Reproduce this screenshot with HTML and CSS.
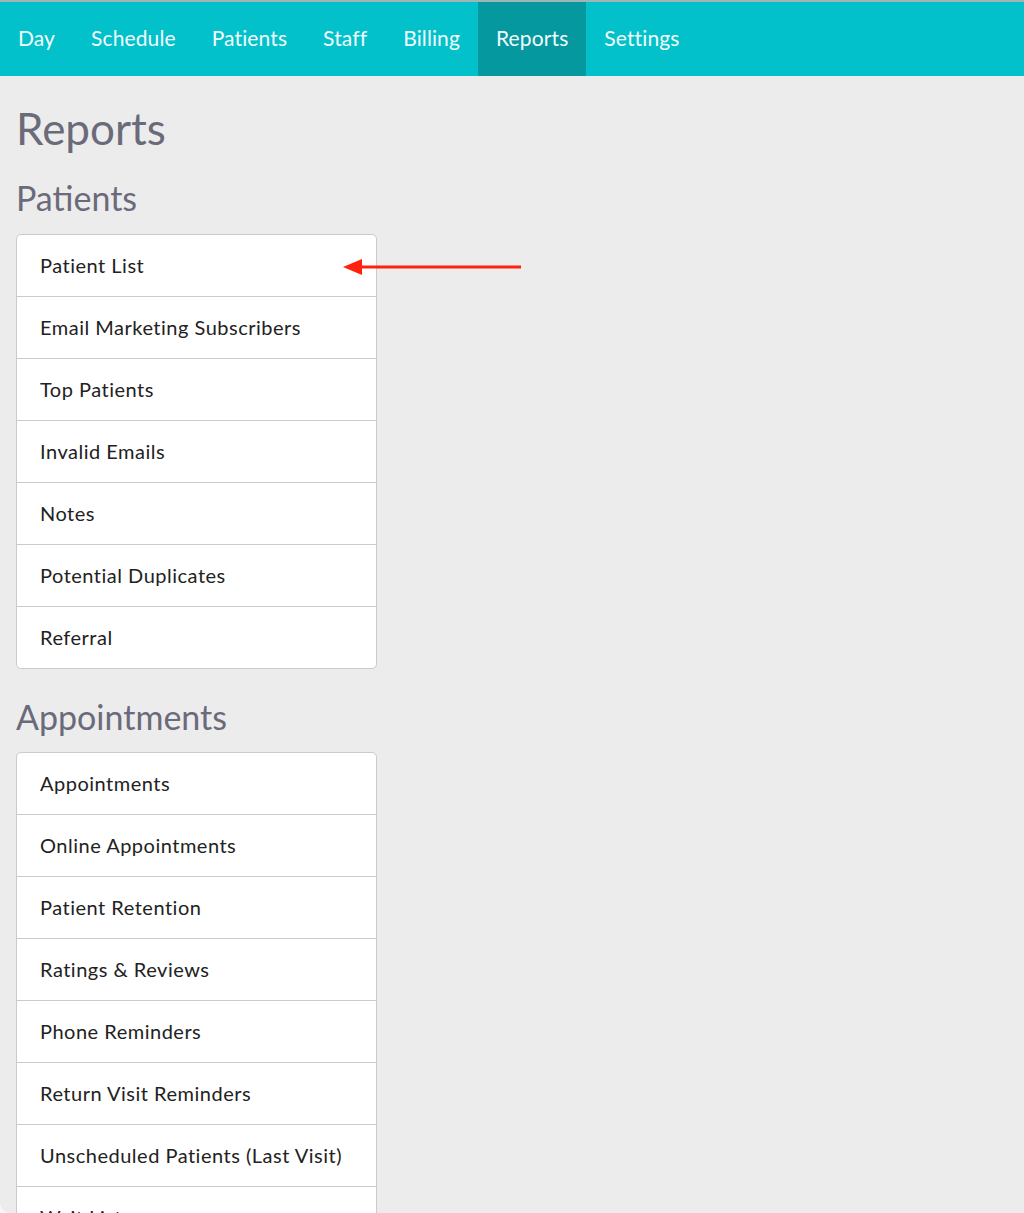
FILE: index.html
```html
<!DOCTYPE html>
<html>
<head>
<meta charset="utf-8">
<link rel="stylesheet" href="styles.css">
</head>
<body>
<nav class="topnav">
  <a class="nav-item">Day</a>
  <a class="nav-item">Schedule</a>
  <a class="nav-item">Patients</a>
  <a class="nav-item">Staff</a>
  <a class="nav-item">Billing</a>
  <a class="nav-item active">Reports</a>
  <a class="nav-item">Settings</a>
</nav>
<main class="content">
  <h1 class="page-title">Reports</h1>

  <h2 class="section-title">Patients</h2>
  <div class="report-list-wrap">
    <ul class="report-list">
      <li>Patient List</li>
      <li>Email Marketing Subscribers</li>
      <li>Top Patients</li>
      <li>Invalid Emails</li>
      <li>Notes</li>
      <li>Potential Duplicates</li>
      <li>Referral</li>
    </ul>
    <svg class="annot-arrow" width="200" height="24" viewBox="0 0 200 24">
      <line x1="14" y1="12" x2="178" y2="12" stroke="#ff2210" stroke-width="3"/>
      <polygon points="0,12 19,4 19,20" fill="#ff2210"/>
    </svg>
  </div>

  <h2 class="section-title section-title--tight">Appointments</h2>
  <ul class="report-list">
    <li>Appointments</li>
    <li>Online Appointments</li>
    <li>Patient Retention</li>
    <li>Ratings &amp; Reviews</li>
    <li>Phone Reminders</li>
    <li>Return Visit Reminders</li>
    <li>Unscheduled Patients (Last Visit)</li>
    <li>Wait List</li>
    <li>Cancellations</li>
  </ul>
</main>
<div class="window-corner"></div>
</body>
</html>
```

FILE: styles.css
```css
html, body {
  margin: 0;
  padding: 0;
}
body {
  background: #ececec;
  font-family: Lato, "Open Sans", sans-serif;
  overflow: hidden;
  height: 1213px;
}
.topnav {
  display: flex;
  background: #02c1cb;
  border-top: 2px solid #9fb5b7;
  height: 74px;
  align-items: stretch;
}
.nav-item {
  display: flex;
  align-items: center;
  padding: 0 18px 3px;
  color: #f2fbfb;
  font-size: 21px;
  letter-spacing: 0.12px;
}
.nav-item.active {
  background: #05989e;
}
.content {
  padding: 0 16px;
}
.page-title {
  margin: 0;
  padding-top: 25px;
  font-size: 44px;
  line-height: 54px;
  font-weight: 400;
  color: #6b6a7a;
}
.section-title {
  margin: 22px 0 15px;
  font-size: 34px;
  line-height: 42px;
  font-weight: 400;
  color: #6b6a7a;
}
.section-title--tight {
  margin-bottom: 14px;
}
.report-list-wrap {
  position: relative;
}
.report-list {
  list-style: none;
  margin: 0 0 27px;
  padding: 0;
  width: 359px;
  background: #fff;
  border: 1px solid #cbcbcb;
  border-radius: 5px;
}
.report-list li {
  height: 61px;
  line-height: 61px;
  padding-left: 23px;
  font-size: 20px;
  letter-spacing: 0.5px;
  color: #222;
  border-top: 1px solid #cbcbcb;
  white-space: nowrap;
}
.report-list li:first-child {
  border-top: none;
}
.annot-arrow {
  position: absolute;
  left: 327px;
  top: 21px;
}
.window-corner {
  position: fixed;
  left: 0;
  bottom: 0;
  width: 10px;
  height: 10px;
  background: radial-gradient(circle at 100% 0, transparent 9.5px, #f7f7f7 10px);
}
```
